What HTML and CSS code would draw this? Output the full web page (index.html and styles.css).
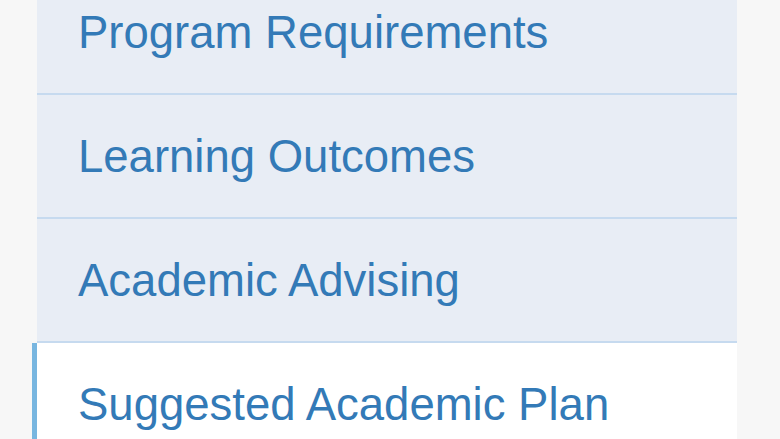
FILE: index.html
```html
<!DOCTYPE html>
<html lang="en">
<head>
  <meta charset="UTF-8">
  <meta name="viewport" content="width=device-width, initial-scale=1.0">
  <title>Program Navigation</title>
  <link rel="stylesheet" href="styles.css">
</head>
<body>
  <ul class="side-nav">
    <li class="nav-item"><a href="#">Program Requirements</a></li>
    <li class="nav-item"><a href="#">Learning Outcomes</a></li>
    <li class="nav-item"><a href="#">Academic Advising</a></li>
    <li class="nav-item active"><a href="#">Suggested Academic Plan</a></li>
  </ul>
</body>
</html>
```

FILE: styles.css
```css
body {
  margin: 0;
  background: #f7f7f7;
  font-family: 'Liberation Sans', Arial, sans-serif;
  overflow: hidden;
}

.side-nav {
  list-style: none;
  margin: -29px 0 0 37px;
  padding: 0;
  width: 700px;
}

.nav-item {
  background: #e8edf5;
  border-bottom: 2px solid #c6daef;
}

.nav-item a {
  display: block;
  height: 122px;
  line-height: 123px;
  padding-left: 41px;
  font-size: 45.5px;
  color: #337ab7;
  text-decoration: none;
}

.nav-item.active {
  background: #fff;
  border-left: 5px solid #78b6e0;
  margin-left: -5px;
  border-bottom: none;
}
```
